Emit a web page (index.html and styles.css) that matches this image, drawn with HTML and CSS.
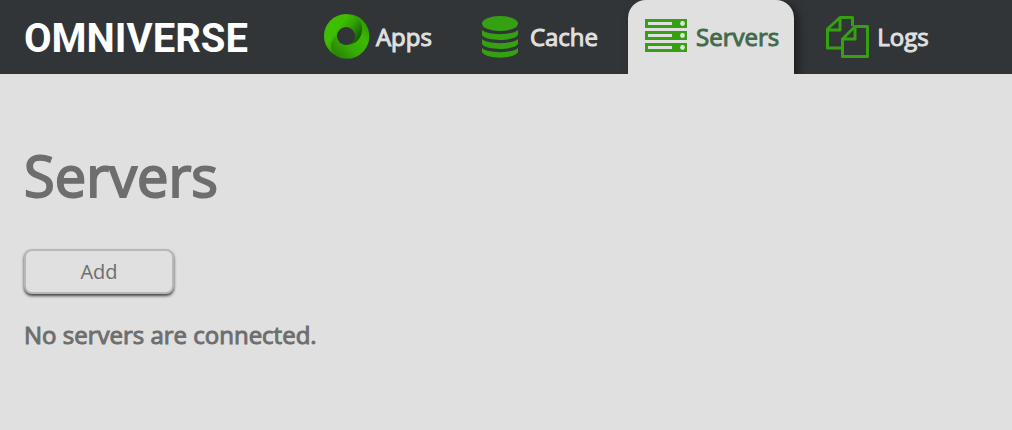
FILE: index.html
```html
<!DOCTYPE html>
<html lang="en">
<head>
    <meta charset="UTF-8">
    <meta name="viewport" content="width=device-width, initial-scale=1.0">
    <title>Omniverse - Servers</title>
    <link rel="stylesheet" href="styles.css">
</head>
<body>
    <header class="header">
        <div class="logo">OMNIVERSE</div>
        <nav class="tabs">
            <a class="tab" href="#apps">
                <svg class="icon" viewBox="0 0 48 48" aria-hidden="true">
                    <defs>
                        <linearGradient id="ring-left" gradientUnits="userSpaceOnUse" x1="20" y1="10" x2="38" y2="24">
                            <stop offset="0" stop-color="#3fbe00"/>
                            <stop offset="0.4" stop-color="#34a402"/>
                            <stop offset="1" stop-color="#145f00"/>
                        </linearGradient>
                        <linearGradient id="ring-right" gradientUnits="userSpaceOnUse" x1="44" y1="8" x2="14" y2="40">
                            <stop offset="0" stop-color="#2c9404"/>
                            <stop offset="0.35" stop-color="#3db800"/>
                            <stop offset="0.7" stop-color="#38ac02"/>
                            <stop offset="1" stop-color="#2a8a04"/>
                        </linearGradient>
                    </defs>
                    <circle cx="24" cy="24" r="22" fill="url(#ring-left)"/>
                    <path d="M28 2C36 5 41 11 40 19C39 28 32 33 24 33C19 33 15 29 15 23C7 29 7 39 15 44.500A22.500 22.500 0 1 0 28 2Z" fill="url(#ring-right)"/>
                    <circle cx="24" cy="24" r="9" fill="#323538"/>
                </svg>
                Apps
            </a>
            <a class="tab" href="#cache">
                <svg class="icon" viewBox="0 0 48 48" fill="#34a012" aria-hidden="true">
                    <ellipse cx="24" cy="11.500" rx="18" ry="7.500"/>
                    <path d="M6 18C11 23.500 37 23.500 42 18V23C38 29.500 10 29.500 6 23Z"/>
                    <path d="M6 27C11 32.500 37 32.500 42 27V32C38 38.500 10 38.500 6 32Z"/>
                    <path d="M6 36C11 41.500 37 41.500 42 36V40C38 47.500 10 47.500 6 40Z"/>
                </svg>
                Cache
            </a>
            <a class="tab active" href="#servers" aria-current="page">
                <svg class="icon" viewBox="0 0 48 48" aria-hidden="true">
                    <path d="M3 7H45V16H3ZM3 19H45V28H3ZM3 31H45V40H3Z" fill="#34a012"/>
                    <path d="M6 10H30V13H6ZM6 22H30V25H6ZM6 34H30V37H6Z" fill="#e0e0e0"/>
                    <g fill="#e0e0e0">
                        <circle cx="40.500" cy="11.500" r="2.400"/>
                        <circle cx="40.500" cy="23.500" r="2.400"/>
                        <circle cx="40.500" cy="35.500" r="2.400"/>
                    </g>
                </svg>
                Servers
            </a>
            <a class="tab" href="#logs">
                <svg class="icon" viewBox="0 0 48 48" fill="none" stroke="#34a012" stroke-width="3" stroke-linejoin="round" aria-hidden="true">
                    <path d="M19 36H4.500V17L17 5.500H29.500V14M17 5.500V18H4.500"/>
                    <path d="M32 14.500H44.500V44.500H19.500V27ZM32 14.500V27H19.500"/>
                </svg>
                Logs
            </a>
        </nav>
    </header>

    <main class="content">
        <h1 class="title">Servers</h1>
        <button class="add-button" type="button">Add</button>
        <p class="message">No servers are connected.</p>
    </main>
</body>
</html>
```
FILE: styles.css
```css
* {
    box-sizing: border-box;
}

body {
    margin: 0;
    background-color: #e0e0e0;
    color: #6e6e6e;
    font-family: "Open Sans", sans-serif;
    font-size: 24px;
}

.header {
    display: flex;
    align-items: stretch;
    gap: 60px;
    height: 74px;
    padding-left: 24px;
    background-color: #323538;
    overflow: hidden;
}

.logo {
    align-self: center;
    padding-top: 2px;
    color: #fff;
    font-family: Roboto, sans-serif;
    font-size: 40px;
    font-weight: 700;
}

.tabs {
    display: flex;
    gap: 15px;
}

.tab {
    display: flex;
    align-items: center;
    gap: 6px;
    padding: 0 15px 2px 14px;
    color: #e0e0e0;
    text-decoration: none;
    -webkit-text-stroke: 1px;
}

.tab.active {
    border-radius: 18px 18px 0 0;
    background-color: #e0e0e0;
    color: #446a4c;
    box-shadow: 4px 4px 10px rgba(0, 0, 0, 0.5);
}

.icon {
    width: 48px;
    height: 48px;
    -webkit-text-stroke: 0;
}

.content {
    padding: 61px 24px 24px;
}

.title {
    margin: 0;
    font-size: 56px;
    font-weight: 400;
    line-height: 80px;
    -webkit-text-stroke: 2px;
}

.add-button {
    display: block;
    width: 150px;
    height: 45px;
    margin: 34px 0 24px;
    border: 2px solid #b8b8b8;
    border-radius: 8px;
    background-color: #e0e0e0;
    color: inherit;
    font-family: inherit;
    font-size: 20px;
    font-weight: 500;
    box-shadow: 0 2px 3px rgba(0, 0, 0, 0.7);
    cursor: pointer;
}

.message {
    margin: 0;
    line-height: 34px;
    -webkit-text-stroke: 1px;
}
```
